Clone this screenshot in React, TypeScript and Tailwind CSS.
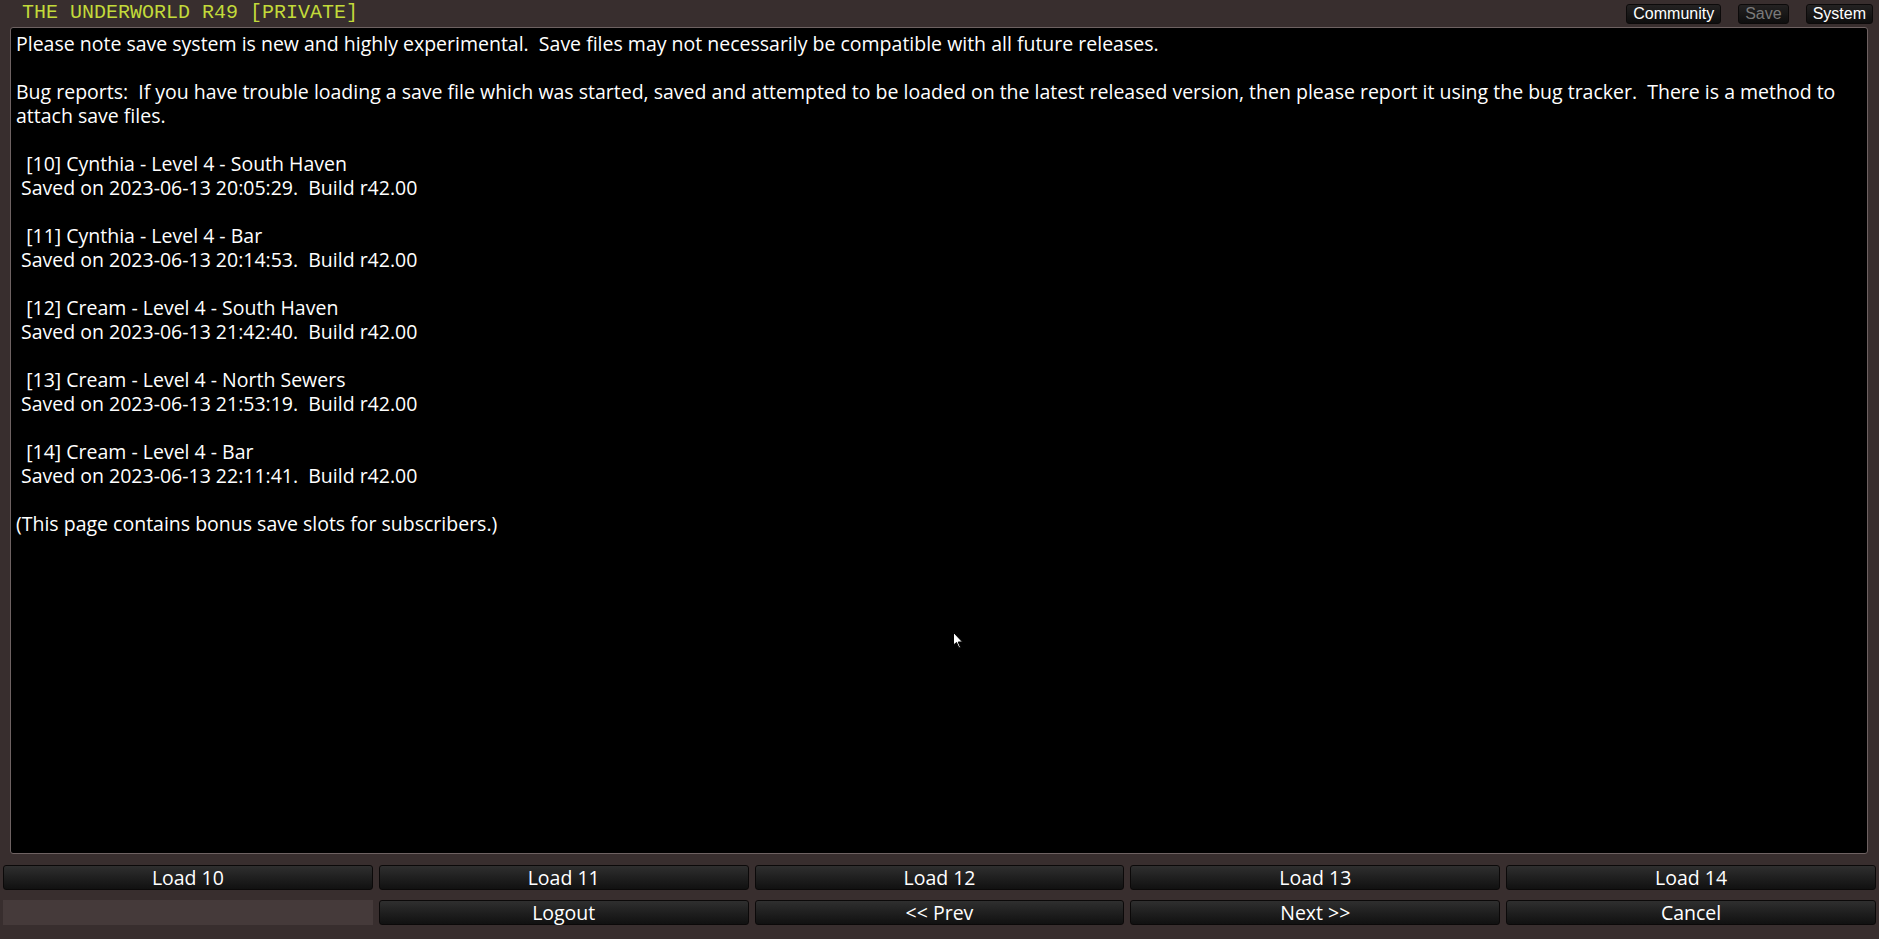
import React from "react";

interface SaveSlot {
  slot: number;
  name: string;
  level: number;
  area: string;
  savedAt: string;
  build: string;
}

const slots: SaveSlot[] = [
  { slot: 10, name: "Cynthia", level: 4, area: "South Haven", savedAt: "2023-06-13 20:05:29", build: "r42.00" },
  { slot: 11, name: "Cynthia", level: 4, area: "Bar", savedAt: "2023-06-13 20:14:53", build: "r42.00" },
  { slot: 12, name: "Cream", level: 4, area: "South Haven", savedAt: "2023-06-13 21:42:40", build: "r42.00" },
  { slot: 13, name: "Cream", level: 4, area: "North Sewers", savedAt: "2023-06-13 21:53:19", build: "r42.00" },
  { slot: 14, name: "Cream", level: 4, area: "Bar", savedAt: "2023-06-13 22:11:41", build: "r42.00" },
];

const TopButton = ({ label, disabled }: { label: string; disabled?: boolean }) => (
  <button
    className={`h-[20px] px-[6px] rounded-[3px] border border-[#0c0a0a] bg-gradient-to-b from-[#242222] to-[#0e0e0e] text-[16px] leading-none font-['Liberation_Sans',sans-serif] ${
      disabled ? "text-[#7a7a7a]" : "text-white"
    }`}
  >
    {label}
  </button>
);

const BarButton = ({ label }: { label: string }) => (
  <button className="h-[25px] rounded-[3px] border border-[#0b0909] bg-gradient-to-b from-[#2f2f2f] to-[#111111] text-white text-[19.5px] leading-none font-['Open_Sans',sans-serif]">
    {label}
  </button>
);

export default function App() {
  return (
    <div className="w-[1879px] h-[939px] bg-[#382e2e] flex flex-col overflow-hidden relative">
      <header className="h-[26px] flex items-center justify-between pl-[22px] pr-[6px]">
        <span className="text-[#c2da3a] text-[20px] leading-none font-['Liberation_Mono',monospace]">
          THE UNDERWORLD R49 [PRIVATE]
        </span>
        <div className="flex gap-[17px] pt-[1px]">
          <TopButton label="Community" />
          <TopButton label="Save" disabled />
          <TopButton label="System" />
        </div>
      </header>

      <main className="flex-1 ml-[10px] mr-[11px] mt-[1px] bg-black border border-[#6e6262] rounded-[3px] px-[5px] pt-[4px] text-white text-[19.5px] leading-[24px] font-['Open_Sans',sans-serif] whitespace-pre-wrap overflow-hidden">
        <p>Please note save system is new and highly experimental.  Save files may not necessarily be compatible with all future releases.</p>
        <p className="mt-[24px]">
          Bug reports:  If you have trouble loading a save file which was started, saved and attempted to be loaded on the latest released version, then please report it using the bug tracker.  There is a method to attach save files.
        </p>
        {slots.map((s) => (
          <div key={s.slot} className="mt-[24px]">
            <p>{`  [${s.slot}] ${s.name} - Level ${s.level} - ${s.area}`}</p>
            <p>{` Saved on ${s.savedAt}.  Build ${s.build}`}</p>
          </div>
        ))}
        <p className="mt-[24px]">(This page contains bonus save slots for subscribers.)</p>
      </main>

      <footer className="mt-[11px] mb-[14px] px-[3px] grid grid-cols-5 gap-x-[6px] gap-y-[10px]">
        {slots.map((s) => (
          <BarButton key={s.slot} label={`Load ${s.slot}`} />
        ))}
        <div className="h-[25px] bg-[#453a3a]" />
        <BarButton label="Logout" />
        <BarButton label="<< Prev" />
        <BarButton label="Next >>" />
        <BarButton label="Cancel" />
      </footer>

      {/* mouse pointer resting over the panel */}
      <svg className="absolute left-[953px] top-[632px]" width="11" height="17" viewBox="0 0 11 17">
        <path d="M0.5 0.5 L0.5 13 L3.5 10.5 L6 16 L7.5 15.3 L5.2 10 L9.5 10 Z" fill="#fff" stroke="#000" strokeWidth="1" />
      </svg>
    </div>
  );
}
